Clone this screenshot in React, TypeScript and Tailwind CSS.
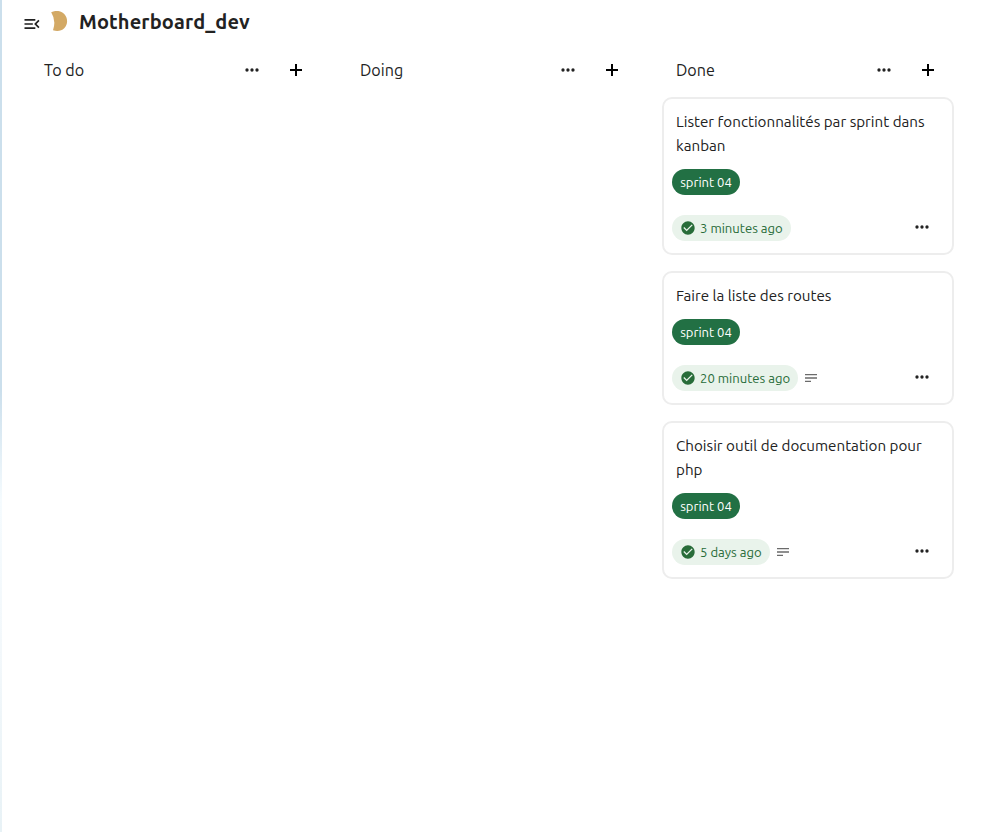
import React from "react";

const DOTS =
  "M16,12A2,2 0 0,1 18,10A2,2 0 0,1 20,12A2,2 0 0,1 18,14A2,2 0 0,1 16,12M10,12A2,2 0 0,1 12,10A2,2 0 0,1 14,12A2,2 0 0,1 12,14A2,2 0 0,1 10,12M4,12A2,2 0 0,1 6,10A2,2 0 0,1 8,12A2,2 0 0,1 6,14A2,2 0 0,1 4,12Z";
const PLUS = "M19,13H13V19H11V13H5V11H11V5H13V11H19V13Z";
const MENU_OPEN =
  "M21,15.61L19.59,17L14.58,12L19.59,7L21,8.39L17.44,12L21,15.61M3,6H16V8H3V6M3,13V11H13V13H3M3,18V16H16V18H3Z";
const CHECK_CIRCLE =
  "M12 2C6.5 2 2 6.5 2 12S6.5 22 12 22 22 17.5 22 12 17.5 2 12 2M10 17L5 12L6.41 10.59L10 14.17L17.59 6.58L19 8L10 17Z";
const TEXT = "M21,6V8H3V6H21M3,18H12V16H3V18M3,13H21V11H3V13Z";

function Icon({ d, className, crisp }: { d: string; className: string; crisp?: boolean }) {
  return (
    <svg
      viewBox="0 0 24 24"
      fill="currentColor"
      shapeRendering={crisp ? "crispEdges" : undefined}
      className={`shrink-0 ${className}`}
      aria-hidden="true"
    >
      <path d={d} />
    </svg>
  );
}

type CardData = {
  title: string;
  due: { text: string; className: string };
  description?: boolean;
};

const doneCards: CardData[] = [
  {
    title: "Lister fonctionnalités par sprint dans kanban",
    due: { text: "3 minutes ago", className: "w-[119px]" },
  },
  {
    title: "Faire la liste des routes",
    due: { text: "20 minutes ago", className: "w-[126px]" },
    description: true,
  },
  {
    title: "Choisir outil de documentation pour php",
    due: { text: "5 days ago", className: "w-[98px]" },
    description: true,
  },
];

function Card({ card }: { card: CardData }) {
  return (
    <article className="flex flex-col items-start rounded-[10px] border-2 border-[#ededed] bg-white px-2 pt-[11px] pb-3">
      <h4 className="ml-1 text-[15.2px] leading-6">{card.title}</h4>
      <span className="mt-[11px] flex h-[26px] w-[68px] items-center justify-center rounded-full bg-[#227044] pt-px text-[13.05px] whitespace-nowrap text-white">
        sprint 04
      </span>
      <div className="mt-5 flex h-[26px] w-full items-center">
        <div
          className={`flex h-[26px] items-center gap-1 rounded-full bg-[#e9f3eb] pl-2 text-[13.1px] whitespace-nowrap text-[#286c39] ${card.due.className}`}
        >
          <Icon d={CHECK_CIRCLE} className="size-4" />
          <span className="pt-[2px]">{card.due.text}</span>
        </div>
        {card.description && <Icon d={TEXT} className="ml-[5px] size-4 text-[#6b6b6b]" />}
        <button className="mr-3 mb-[2px] ml-auto" aria-label="Actions">
          <Icon d={DOTS} className="size-5" />
        </button>
      </div>
    </article>
  );
}

function Column({ name, cards = [] }: { name: string; cards?: CardData[] }) {
  return (
    <section className="w-[292px]">
      <header className="flex h-[54px] items-center pr-4 pl-[14px]">
        <h3 className="flex-1 text-[16.1px]">{name}</h3>
        <Icon d={DOTS} className="mr-6 size-5" />
        <Icon d={PLUS} crisp className="size-5 text-black" />
      </header>
      <div className="flex flex-col gap-4">
        {cards.map((card, i) => (
          <Card key={i} card={card} />
        ))}
      </div>
    </section>
  );
}

export default function App() {
  return (
    <div className="flex h-[832px] w-[1006px] overflow-hidden bg-white font-['Ubuntu','Noto_Sans',sans-serif] text-[#222222]">
      <div className="w-[2px] shrink-0 bg-[linear-gradient(to_bottom,#cbdfec_0px,#cbdfec_390px,#f5fbfe_500px,#f3f8fb_650px,#e8f2f6_832px)]" />
      <main className="flex-1 pl-[20px]">
        <div className="flex h-[43px] items-center">
          <Icon d={MENU_OPEN} className="mt-[5px] size-5" />
          <svg viewBox="0 0 18 20" className="mb-px ml-[8px] h-5 w-[18px] shrink-0" aria-hidden="true">
            <path d="M1.2 1.2C10 -2.8 17.1 3 17.1 10.2C17.1 17 10.5 22 3 19.2Q6.4 9.5 1.2 1.2Z" fill="#d3a965" />
          </svg>
          <h2 className="ml-[11px] text-xl font-bold tracking-[0.13px]">Motherboard_dev</h2>
        </div>
        <div className="ml-2 flex gap-6">
          <Column name="To do" />
          <Column name="Doing" />
          <Column name="Done" cards={doneCards} />
        </div>
      </main>
    </div>
  );
}
